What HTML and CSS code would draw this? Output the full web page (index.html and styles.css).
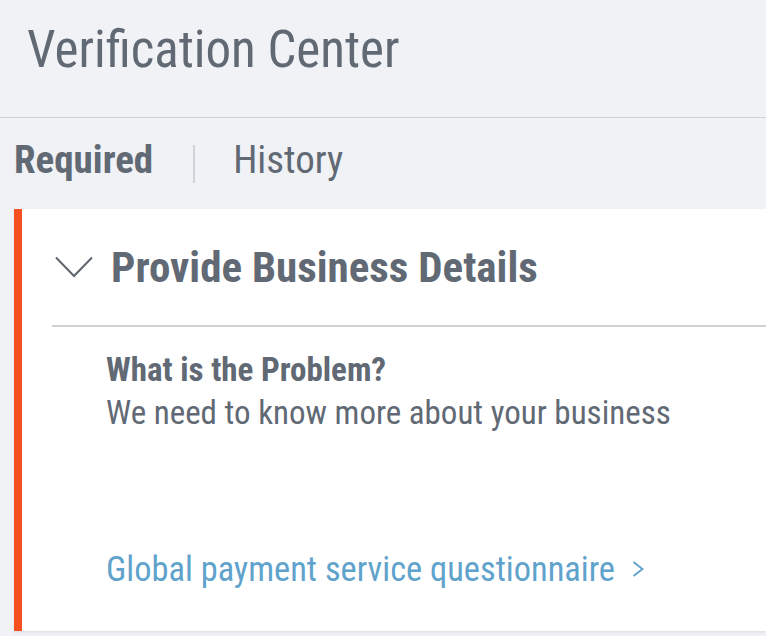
FILE: index.html
```html
<!DOCTYPE html>
<html lang="en">
<head>
  <meta charset="UTF-8" />
  <meta name="viewport" content="width=device-width, initial-scale=1.0" />
  <title>Verification Center</title>
  <link rel="stylesheet" href="styles.css">
</head>
<body>
  <div class="page">
    <h1 class="page-title">Verification Center</h1>

    <!-- tabs -->
    <div class="tabs">
      <span class="tab active">Required</span>
      <span class="tab-sep"></span>
      <span class="tab">History</span>
    </div>

    <!-- task card -->
    <div class="card">
      <div class="card-head">
        <svg class="chevron" width="38" height="22" viewBox="0 0 38 22">
          <polyline points="1,1.5 19,20 37,1.5" fill="none" stroke="#5f6670" stroke-width="2" />
        </svg>
        <h2 class="card-title">Provide Business Details</h2>
      </div>
      <div class="card-body">
        <div class="problem-label">What is the Problem?</div>
        <div class="problem-text">We need to know more about your business</div>
        <a class="card-link" href="#">Global payment service questionnaire
          <svg class="arrow" width="12" height="16" viewBox="0 0 12 16">
            <polyline points="1.5,1 10.5,8 1.5,15" fill="none" stroke="#5fa3cc" stroke-width="2" />
          </svg>
        </a>
      </div>
    </div>
  </div>
</body>
</html>
```

FILE: styles.css
```css
body {
  margin: 0;
  padding: 0;
  background-color: #f0f2f5;
  font-family: "Roboto Condensed", Roboto, "Liberation Sans", sans-serif;
  font-stretch: condensed;
  color: #616974;
}
.page {
  width: 766px;
  height: 636px;
  overflow: hidden;
}
.page-title {
  margin: 0;
  height: 118px;
  box-sizing: border-box;
  padding: 18px 0 0 27px;
  font-size: 51px;
  font-weight: 400;
  line-height: 64px;
  border-bottom: 1px solid #cfd1d5;
}
.tabs {
  display: flex;
  align-items: center;
  height: 83px;
  padding: 0 0 8px 14px;
}
.tab {
  font-size: 39px;
  line-height: 48px;
  font-weight: 400;
}
.tab.active {
  font-weight: 700;
}
.tab-sep {
  width: 2px;
  height: 38px;
  background-color: #d0d3d7;
  margin: 8px 38px 0 40px;
}
.card {
  margin-left: 14px;
  height: 422px;
  background-color: #ffffff;
  border-left: 8px solid #f4511e;
  box-shadow: 0 2px 2px rgba(0, 0, 0, 0.06);
}
.card-head {
  display: flex;
  align-items: center;
  height: 116px;
  margin-left: 30px;
  padding-left: 3px;
  border-bottom: 2px solid #cfd1d5;
}
.chevron {
  flex: none;
}
.card-title {
  margin: 0 0 0 18px;
  font-size: 43px;
  font-weight: 700;
  line-height: 50px;
}
.card-body {
  padding: 22px 0 0 84px;
}
.problem-label {
  font-size: 33px;
  font-weight: 700;
  line-height: 42px;
}
.problem-text {
  font-size: 33px;
  line-height: 44px;
}
.card-link {
  display: inline-flex;
  align-items: center;
  gap: 17px;
  margin-top: 113px;
  font-size: 34.4px;
  line-height: 42px;
  color: #5fa3cc;
  text-decoration: none;
}
```
